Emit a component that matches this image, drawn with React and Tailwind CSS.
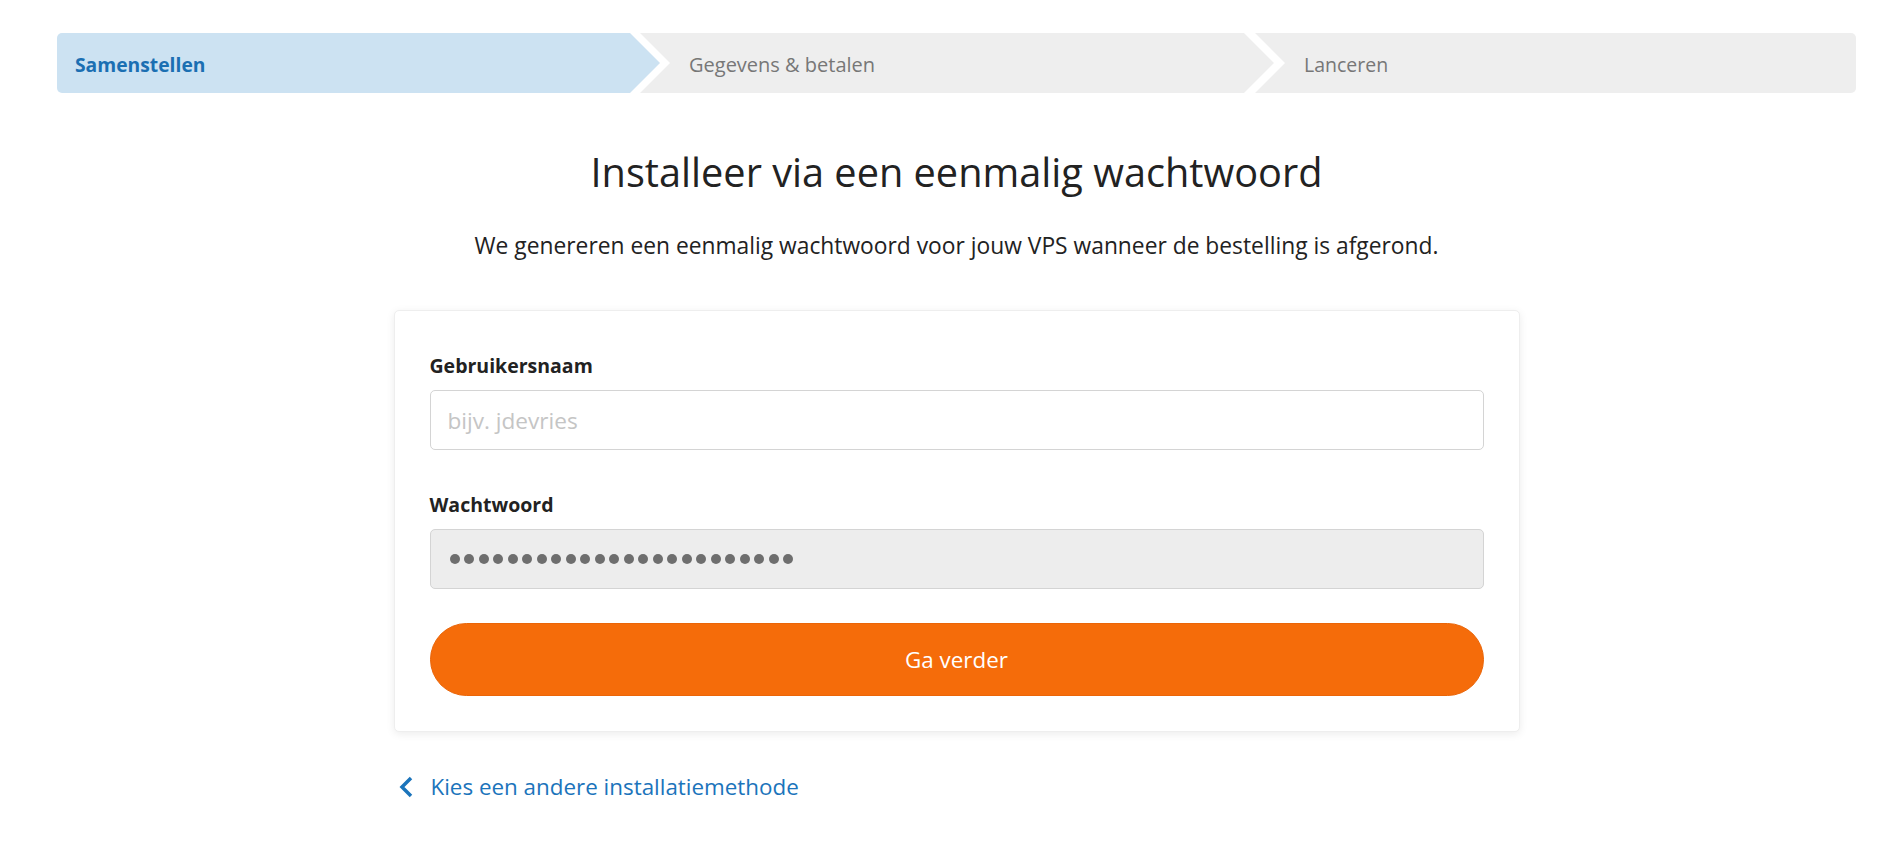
import React from "react";

const DOTS = Array.from({ length: 24 });

function Stepper() {
  return (
    <div className="flex h-[60px] overflow-hidden rounded-[5px]">
      <div className="flex w-[603px] shrink-0 items-center bg-[#cce2f2] pt-[4px] pl-[18px] text-[19.3px] font-bold text-[#1b6fb2] [clip-path:polygon(0_0,calc(100%_-_30px)_0,100%_50%,calc(100%_-_30px)_100%,0_100%)]">
        Samenstellen
      </div>
      <div className="-ml-[20px] flex w-[634px] shrink-0 items-center bg-[#eeeeee] pt-[4px] pl-[49px] text-[20px] text-[#777777] [clip-path:polygon(0_0,calc(100%_-_30px)_0,100%_50%,calc(100%_-_30px)_100%,0_100%,30px_50%)]">
        Gegevens &amp; betalen
      </div>
      <div className="-ml-[19px] flex flex-1 items-center bg-[#eeeeee] pt-[4px] pl-[49px] text-[19.5px] text-[#777777] [clip-path:polygon(0_0,100%_0,100%_100%,0_100%,30px_50%)]">
        Lanceren
      </div>
    </div>
  );
}

export default function App() {
  return (
    <div className="min-h-screen bg-white pt-[33px] pl-[57px] pr-[44px] font-['Open_Sans',sans-serif] text-[#222222]">
      <Stepper />

      <h1 className="mt-[55px] text-center text-[39.7px] font-normal leading-[48px]">
        Installeer via een eenmalig wachtwoord
      </h1>
      <p className="mt-[35px] text-center text-[22.8px] leading-[30px]">
        We genereren een eenmalig wachtwoord voor jouw VPS wanneer de bestelling is afgerond.
      </p>

      <div className="mx-auto mt-[49px] w-[1126px] rounded-[5px] border border-[#eeeeee] bg-white px-[35px] pt-[43px] pb-[35px] shadow-[0_2px_8px_rgba(0,0,0,0.08)]">
        <label className="block text-[19.5px] font-bold leading-[24px]">Gebruikersnaam</label>
        <input
          type="text"
          placeholder="bijv. jdevries"
          className="mt-[12px] block h-[60px] w-full rounded-[5px] border border-[#d4d4d4] px-[17px] text-[22.6px] outline-none placeholder:text-[#c5c5c5]"
        />

        <label className="mt-[43px] block text-[19.5px] font-bold leading-[24px]">Wachtwoord</label>
        <div className="mt-[12px] flex h-[60px] w-full items-center gap-[4.5px] rounded-[5px] border border-[#d4d4d4] bg-[#ededed] pl-[19px]">
          {DOTS.map((_, i) => (
            <span key={i} className="h-[10px] w-[10px] rounded-full bg-[#6e6e6e]" />
          ))}
        </div>

        <button className="mt-[34px] block h-[73px] w-full rounded-full border border-[#ea6508] bg-[#f56c0a] text-[22.4px] text-white">
          Ga verder
        </button>
      </div>

      <a href="#" className="mx-auto mt-[40px] flex w-[1126px] items-center text-[22.4px] leading-[30px] text-[#1b74bb]">
        <svg width="16" height="22" viewBox="0 0 16 22" className="ml-[4px] shrink-0" fill="none">
          <path d="M13 2 L4 11 L13 20" stroke="#1b74bb" strokeWidth="3.5" />
        </svg>
        <span className="ml-[17px]">Kies een andere installatiemethode</span>
      </a>
    </div>
  );
}
